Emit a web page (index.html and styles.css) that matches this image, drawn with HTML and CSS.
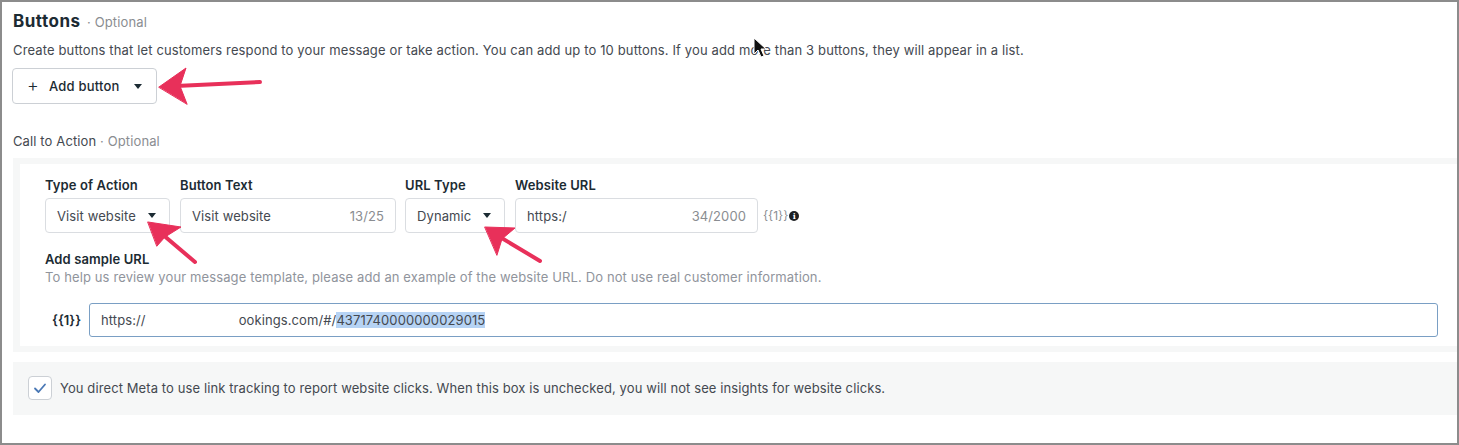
FILE: index.html
```html
<!DOCTYPE html>
<html>
<head>
<meta charset="utf-8">
<link rel="stylesheet" href="styles.css">
</head>
<body>
<div class="frame">
  <h2 class="title">Buttons <span class="opt">· Optional</span></h2>
  <p class="desc">Create buttons that let customers respond to your message or take action. You can add up to 10 buttons. If you add more than 3 buttons, they will appear in a list.</p>
  <button class="add-btn"><span class="plus">+</span>Add button<span class="caret"></span></button>

  <div class="cta-title">Call to Action <span class="opt">· Optional</span></div>

  <div class="panel">
    <div class="card">
      <div class="fields">
        <div class="field f-type">
          <label>Type of Action</label>
          <div class="box select"><span>Visit website</span><span class="caret"></span></div>
        </div>
        <div class="field f-text">
          <label>Button Text</label>
          <div class="box"><span>Visit website</span><span class="count">13/25</span></div>
        </div>
        <div class="field f-urltype">
          <label>URL Type</label>
          <div class="box select"><span>Dynamic</span><span class="caret"></span></div>
        </div>
        <div class="field f-url">
          <label>Website URL</label>
          <div class="url-row">
            <div class="box"><span>https:/</span><span class="count">34/2000</span></div>
            <span class="var">{{1}}</span><span class="info">i</span>
          </div>
        </div>
      </div>

      <div class="sample-title">Add sample URL</div>
      <div class="sample-help">To help us review your message template, please add an example of the website URL. Do not use real customer information.</div>
      <div class="sample-row">
        <span class="sample-var">{{1}}</span>
        <div class="sample-input"><span>https://</span><span class="redact"></span><span>ookings.com/#/</span><span class="sel">4371740000000029015</span></div>
      </div>
    </div>
  </div>

  <div class="panel check-panel">
    <span class="checkbox"><svg width="14" height="12" viewBox="0 0 14 12"><path d="M2 6.5 L5.5 10 L12 2.5" fill="none" stroke="#4a78b5" stroke-width="1.8" stroke-linecap="round" stroke-linejoin="round"/></svg></span>
    <span class="check-text">You direct Meta to use link tracking to report website clicks. When this box is unchecked, you will not see insights for website clicks.</span>
  </div>

  <svg class="overlay" width="1459" height="445" viewBox="0 0 1459 445">
    <g fill="#e8305a" stroke="#e8305a" stroke-linecap="round">
      <line x1="260" y1="82" x2="176" y2="86" stroke-width="4"/>
      <polygon points="159,87 186,68 180,86 187,104" stroke-width="1" stroke-linejoin="round"/>
      <line x1="195" y1="262" x2="162" y2="234" stroke-width="4"/>
      <polygon points="148,222 181,227 165,237 157,246" stroke-width="1" stroke-linejoin="round"/>
      <line x1="540" y1="261" x2="500" y2="237" stroke-width="4"/>
      <polygon points="485,227 515,228 502,239 497,255" stroke-width="1" stroke-linejoin="round"/>
    </g>
    <path d="M754 38 L754 54 L758 50 L761 57 L764 56 L761 49 L766 49 Z" fill="#111" stroke="#fff" stroke-width="1"/>
  </svg>
</div>
</body>
</html>
```
FILE: styles.css
```css
* { box-sizing: border-box; }
html, body { margin: 0; padding: 0; background: #fff; }
body { font-family: Inter, "Liberation Sans", Arial, sans-serif; color: #1c2b33; }

.frame {
  position: relative;
  width: 1459px;
  height: 445px;
  border: 2px solid #8c8c8c;
  padding: 9px 0 0 11px;
  overflow: hidden;
}

.title {
  margin: 0;
  font-size: 17px;
  line-height: 20px;
  font-weight: 700;
  letter-spacing: 0.5px;
  color: #1c2b33;
}
.opt { font-weight: normal; color: #8a8d91; font-size: 13px; letter-spacing: 0.12px; }
.title .opt { margin-left: 2px; }

.desc {
  margin: 9px 0 0;
  font-size: 13px;
  line-height: 18px;
  color: #444950;
  letter-spacing: 0.14px;
}

.add-btn {
  margin: 9px 0 0 -1px;
  width: 145px;
  height: 36px;
  display: flex;
  align-items: center;
  padding: 0 0 0 14px;
  background: #fff;
  border: 1px solid #ccd0d5;
  border-radius: 4px;
  font-family: inherit;
  font-size: 13px;
  font-weight: 500;
  letter-spacing: 0.2px;
  color: #1c2b33;
}
.plus { font-size: 18px; font-weight: 300; margin-right: 10px; line-height: 1; }
.caret {
  display: inline-block;
  width: 0; height: 0;
  border-left: 4.5px solid transparent;
  border-right: 4.5px solid transparent;
  border-top: 5px solid #1c2b33;
}
.add-btn .caret { margin-left: 14px; }

.cta-title {
  margin-top: 28px;
  font-size: 13px;
  line-height: 18px;
  color: #444950;
  letter-spacing: 0.12px;
}

.panel {
  margin-top: 8px;
  background: #f6f7f7;
  padding: 6px 0 6px 7px;
  width: 1460px;
}
.card {
  background: #fff;
  padding: 12px 0 9px 25px;
}

.fields { display: flex; align-items: flex-start; }
.field { display: flex; flex-direction: column; }
.field label {
  font-size: 13px;
  line-height: 18px;
  font-weight: 600;
  color: #1c2b33;
  margin-bottom: 4px;
  letter-spacing: 0.1px;
}
.box {
  height: 35px;
  border: 1px solid #dadde1;
  border-radius: 4px;
  display: flex;
  align-items: center;
  justify-content: space-between;
  padding: 0 11px;
  font-size: 13px;
  color: #444950;
  background: #fff;
  letter-spacing: 0.1px;
}
.count { color: #8a8d91; }
.f-type { width: 125px; margin-right: 10px; }
.f-text { width: 216px; margin-right: 9px; }
.f-urltype { width: 100px; margin-right: 10px; }
.f-url .box { width: 243px; }
.select .caret { margin-right: 2px; }

.url-row { display: flex; align-items: center; }
.var { font-size: 12px; color: #8a8d91; margin-left: 5px; }
.info {
  display: inline-flex; align-items: center; justify-content: center;
  width: 10px; height: 10px; border-radius: 50%;
  background: #1c1e21; color: #fff;
  font-size: 8px; font-weight: bold; font-family: "DejaVu Serif", serif;
  margin-left: 1px;
}

.sample-title {
  margin-top: 17px;
  font-size: 13px;
  line-height: 18px;
  font-weight: 600;
  color: #1c2b33;
  letter-spacing: 0.1px;
}
.sample-help {
  font-size: 13px;
  line-height: 18px;
  color: #90949c;
  letter-spacing: 0.12px;
}
.sample-row {
  margin-top: 17px;
  display: flex;
  align-items: center;
}
.sample-var {
  width: 44px;
  padding-left: 7px;
  font-size: 13px;
  font-weight: 600;
  color: #1c2b33;
}
.sample-input {
  width: 1349px;
  height: 34px;
  border: 1.5px solid #7a9fc4;
  border-radius: 3px;
  display: flex;
  align-items: center;
  padding-left: 11px;
  font-size: 13px;
  color: #444950;
  letter-spacing: 0.1px;
}
.redact { display: inline-block; width: 93px; }
.sel { background: #b6d3f4; }

.check-panel {
  margin-top: 10px;
  height: 53px;
  padding: 14px 0 0 15px;
  display: flex;
  align-items: flex-start;
}
.checkbox {
  width: 24px; height: 24px;
  border: 1px solid #ccd0d5;
  border-radius: 4px;
  background: #fff;
  display: flex; align-items: center; justify-content: center;
  flex: none;
}
.check-text {
  margin-left: 8px;
  font-size: 13px;
  line-height: 24px;
  color: #444950;
  letter-spacing: 0.1px;
}

.overlay { position: absolute; left: -2px; top: -2px; pointer-events: none; }
```
